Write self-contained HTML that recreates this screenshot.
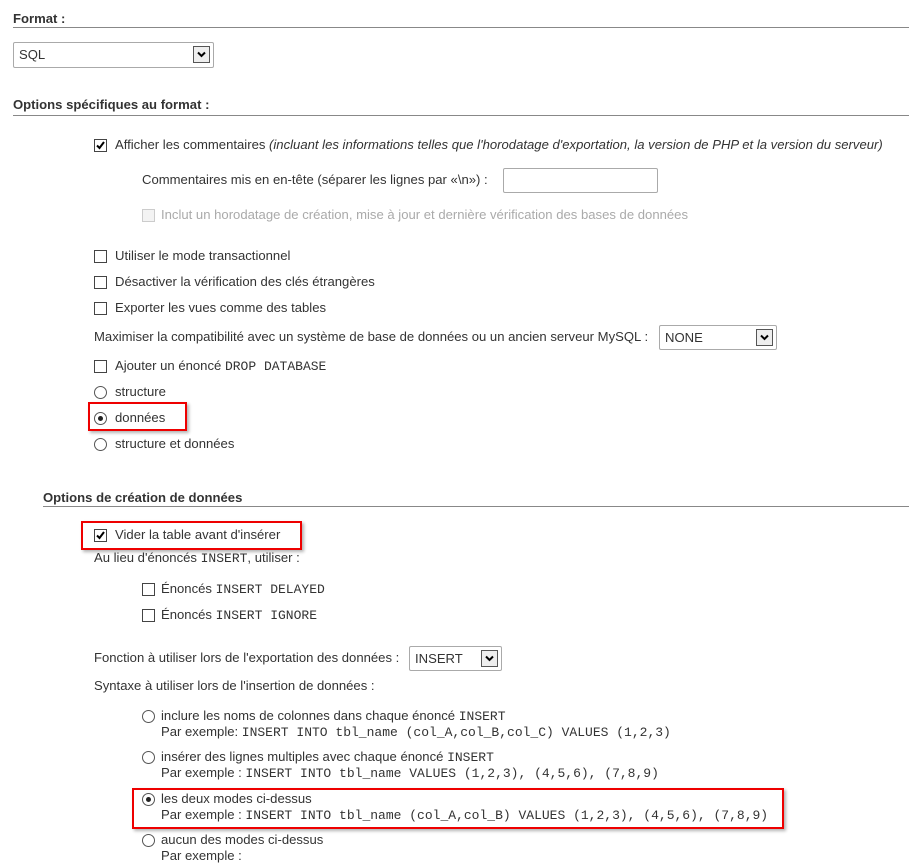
<!DOCTYPE html>
<html><head><meta charset="utf-8"><style>
body{margin:0;background:#fff;width:909px;height:853px;position:relative;overflow:hidden;font-family:"Liberation Sans",Arial,sans-serif;font-size:13.1px;color:#333}
.t{position:absolute;line-height:16px;white-space:nowrap}
.b{font-weight:bold}
.m{font-family:"Liberation Mono","Courier New",monospace;font-size:13px}
.hr{position:absolute;height:1px;background:#888;right:0}
.cb{position:absolute;width:11px;height:11px;border:1px solid #444;background:#fff}
.cb.dis{border-color:#ccc;background:#f3f3f3}
.rd{position:absolute;width:11px;height:11px;border:1px solid #555;border-radius:50%;background:#fff}
.rd.on::after{content:"";position:absolute;left:3px;top:3px;width:5px;height:5px;border-radius:50%;background:#222}
.sel{position:absolute;border:1px solid #aaa;border-radius:2px;background:#fff}
.sel span{position:absolute;left:5px;top:4px;line-height:16px}
.arr{position:absolute;right:3px;top:3px;width:17px;height:17px;border:1px solid #555;background:#eee;box-sizing:border-box}
.red{position:absolute;border:2px solid #e00;box-shadow:2px 2px 3px rgba(0,0,0,.3)}
.inp{position:absolute;border:1px solid #aaa;border-radius:2px;background:#fff}
</style></head><body>
<div class="t b" style="left:13px;top:11px">Format :</div>
<div class="hr" style="left:13px;top:27px"></div>
<div class="sel" style="left:13px;top:42px;width:199px;height:24px"><span>SQL</span><div class="arr"><svg width="15" height="15" viewBox="0 0 15 15"><path d="M4 5.5l3.5 3.5 3.5-3.5" stroke="#000" stroke-width="2" fill="none"/></svg></div></div>

<div class="t b" style="left:13px;top:97px">Options spécifiques au format :</div>
<div class="hr" style="left:13px;top:115px"></div>

<div class="cb" style="left:94px;top:139px"><svg width="11" height="11" viewBox="0 0 11 11" style="position:absolute;left:0;top:0"><path d="M2 5.5l2.5 2.5 4.5-6" stroke="#000" stroke-width="2" fill="none"/></svg></div>
<div class="t" style="left:115px;top:137px">Afficher les commentaires <i>(incluant les informations telles que l'horodatage d'exportation, la version de PHP et la version du serveur)</i></div>
<div class="t" style="left:142px;top:172px">Commentaires mis en en-tête (séparer les lignes par «\n») :</div>
<div class="inp" style="left:503px;top:168px;width:153px;height:23px"></div>
<div class="cb dis" style="left:142px;top:209px"></div>
<div class="t" style="left:161px;top:207px;color:#aaa">Inclut un horodatage de création, mise à jour et dernière vérification des bases de données</div>

<div class="cb" style="left:94px;top:250px"></div><div class="t" style="left:115px;top:248px">Utiliser le mode transactionnel</div>
<div class="cb" style="left:94px;top:276px"></div><div class="t" style="left:115px;top:274px">Désactiver la vérification des clés étrangères</div>
<div class="cb" style="left:94px;top:302px"></div><div class="t" style="left:115px;top:300px">Exporter les vues comme des tables</div>
<div class="t" style="left:94px;top:329px">Maximiser la compatibilité avec un système de base de données ou un ancien serveur MySQL :</div>
<div class="sel" style="left:659px;top:325px;width:116px;height:23px"><span>NONE</span><div class="arr"><svg width="15" height="15" viewBox="0 0 15 15"><path d="M4 5.5l3.5 3.5 3.5-3.5" stroke="#000" stroke-width="2" fill="none"/></svg></div></div>
<div class="cb" style="left:94px;top:360px"></div><div class="t" style="left:115px;top:358px">Ajouter un énoncé <span class="m">DROP DATABASE</span></div>
<div class="rd" style="left:94px;top:386px"></div><div class="t" style="left:115px;top:384px">structure</div>
<div class="rd on" style="left:94px;top:412px"></div><div class="t" style="left:115px;top:410px">données</div>
<div class="red" style="left:88px;top:402px;width:95px;height:25px"></div>
<div class="rd" style="left:94px;top:438px"></div><div class="t" style="left:115px;top:436px">structure et données</div>

<div class="t b" style="left:43px;top:490px">Options de création de données</div>
<div class="hr" style="left:43px;top:506px"></div>
<div class="cb" style="left:94px;top:529px"><svg width="11" height="11" viewBox="0 0 11 11" style="position:absolute;left:0;top:0"><path d="M2 5.5l2.5 2.5 4.5-6" stroke="#000" stroke-width="2" fill="none"/></svg></div>
<div class="t" style="left:115px;top:527px">Vider la table avant d'insérer</div>
<div class="red" style="left:81px;top:521px;width:217px;height:25px"></div>
<div class="t" style="left:94px;top:550px">Au lieu d'énoncés <span class="m">INSERT</span>, utiliser :</div>
<div class="cb" style="left:142px;top:583px"></div><div class="t" style="left:161px;top:581px">Énoncés <span class="m">INSERT DELAYED</span></div>
<div class="cb" style="left:142px;top:609px"></div><div class="t" style="left:161px;top:607px">Énoncés <span class="m">INSERT IGNORE</span></div>
<div class="t" style="left:94px;top:650px">Fonction à utiliser lors de l'exportation des données :</div>
<div class="sel" style="left:409px;top:646px;width:91px;height:23px"><span>INSERT</span><div class="arr"><svg width="15" height="15" viewBox="0 0 15 15"><path d="M4 5.5l3.5 3.5 3.5-3.5" stroke="#000" stroke-width="2" fill="none"/></svg></div></div>
<div class="t" style="left:94px;top:678px">Syntaxe à utiliser lors de l'insertion de données :</div>

<div class="rd" style="left:142px;top:710px"></div><div class="t" style="left:161px;top:708px">inclure les noms de colonnes dans chaque énoncé <span class="m">INSERT</span></div>
<div class="t" style="left:161px;top:724px">Par exemple: <span class="m">INSERT INTO tbl_name (col_A,col_B,col_C) VALUES (1,2,3)</span></div>
<div class="rd" style="left:142px;top:751px"></div><div class="t" style="left:161px;top:749px">insérer des lignes multiples avec chaque énoncé <span class="m">INSERT</span></div>
<div class="t" style="left:161px;top:765px">Par exemple : <span class="m">INSERT INTO tbl_name VALUES (1,2,3), (4,5,6), (7,8,9)</span></div>
<div class="rd on" style="left:142px;top:793px"></div><div class="t" style="left:161px;top:791px">les deux modes ci-dessus</div>
<div class="t" style="left:161px;top:807px">Par exemple : <span class="m">INSERT INTO tbl_name (col_A,col_B) VALUES (1,2,3), (4,5,6), (7,8,9)</span></div>
<div class="red" style="left:132px;top:788px;width:648px;height:37px"></div>
<div class="rd" style="left:142px;top:834px"></div><div class="t" style="left:161px;top:832px">aucun des modes ci-dessus</div>
<div class="t" style="left:161px;top:848px">Par exemple :</div>
</body></html>
